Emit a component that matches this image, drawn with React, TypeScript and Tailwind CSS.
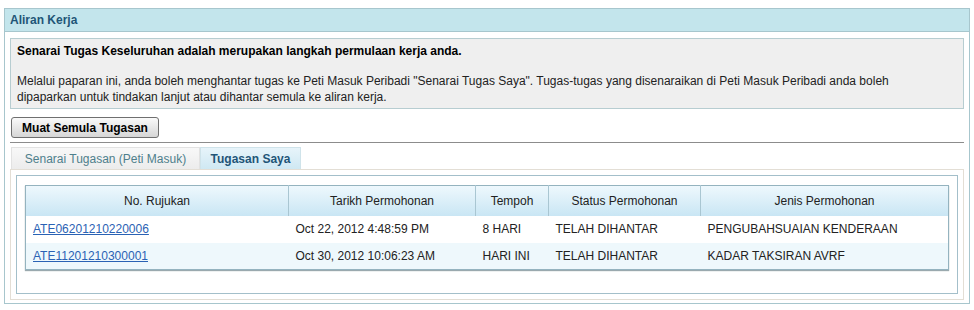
import React from 'react';

const rows = [
  { ref: 'ATE06201210220006', date: 'Oct 22, 2012 4:48:59 PM', tempoh: '8 HARI', status: 'TELAH DIHANTAR', jenis: 'PENGUBAHSUAIAN KENDERAAN' },
  { ref: 'ATE11201210300001', date: 'Oct 30, 2012 10:06:23 AM', tempoh: 'HARI INI', status: 'TELAH DIHANTAR', jenis: 'KADAR TAKSIRAN AVRF' },
];

export default function App() {
  return (
    <div className="w-[974px] h-[310px] bg-white pt-2 px-1 text-[12px] text-[#222]" style={{ fontFamily: '"Liberation Sans", Arial, sans-serif' }}>
      <div className="w-[966px] h-[296px] border border-[#a7c6cd] flex flex-col">
        <div className="h-[23px] bg-[#c3e5ec] border-b border-[#a7c6cd] px-[5px] flex items-center text-[#1f5577] font-semibold">
          Aliran Kerja
        </div>

        <div className="px-[5px] pt-[6px]">
          <div className="h-[71px] bg-[#efefef] border border-[#b7cdd1] px-[6px] pt-[4px] leading-[16px]">
            <div className="font-bold text-black">Senarai Tugas Keseluruhan adalah merupakan langkah permulaan kerja anda.</div>
            <div className="h-[14px]" />
            <div>
              Melalui paparan ini, anda boleh menghantar tugas ke Peti Masuk Peribadi "Senarai Tugas Saya". Tugas-tugas yang disenaraikan di Peti Masuk Peribadi anda boleh
              <br />
              dipaparkan untuk tindakan lanjut atau dihantar semula ke aliran kerja.
            </div>
          </div>

          <div className="mt-[8px] ml-[1px]">
            <button className="h-[21px] w-[148px] rounded-[3px] border border-[#6f6f6f] bg-gradient-to-b from-[#fafafa] to-[#d6d6d6] font-bold text-black text-[12px] leading-[18px]">
              Muat Semula Tugasan
            </button>
          </div>

          <div className="mt-[4px] border-t border-[#8c8c8c]" />

          <div className="mt-[4px] flex h-[22px]">
            <div className="ml-[1px] w-[189px] bg-gradient-to-b from-[#f8f8f8] to-[#ececec] border border-b-0 border-[#e2e2e2] text-[#4e7f8c] flex items-center justify-center">
              Senarai Tugasan (Peti Masuk)
            </div>
            <div className="w-[101px] bg-gradient-to-b from-[#e7f4fa] to-[#cfe8f3] border border-b-0 border-[#cfe3ea] text-[#1f5577] font-bold flex items-center justify-center">
              Tugasan Saya
            </div>
          </div>

          <div className="h-[131px] border border-[#e3ded5] p-[5px]">
            <div className="h-full border border-[#a3bfca] pt-[9px] px-[8px]">
              <table className="w-[924px] border-collapse border border-[#94b3bf] shadow-[0_1px_1px_#9aa9ae]">
                <thead>
                  <tr className="h-[30px] bg-gradient-to-b from-[#eef8fd] to-[#c9e6f4] text-[#222]">
                    <th className="w-[263px] font-normal border-r border-[#a9c6d2]">No. Rujukan</th>
                    <th className="w-[187px] font-normal border-r border-[#a9c6d2]">Tarikh Permohonan</th>
                    <th className="w-[73px] font-normal border-r border-[#a9c6d2]">Tempoh</th>
                    <th className="w-[152px] font-normal border-r border-[#a9c6d2]">Status Permohonan</th>
                    <th className="font-normal">Jenis Permohonan</th>
                  </tr>
                </thead>
                <tbody>
                  {rows.map((r, i) => (
                    <tr key={r.ref} className={i % 2 === 0 ? 'h-[27px] bg-white' : 'h-[27px] bg-[#eef8fc]'}>
                      <td className="pl-[7px]">
                        <a href="#" className="text-[#2a62b4] underline">{r.ref}</a>
                      </td>
                      <td className="pl-[7px]">{r.date}</td>
                      <td className="pl-[7px]">{r.tempoh}</td>
                      <td className="pl-[7px]">{r.status}</td>
                      <td className="pl-[7px]">{r.jenis}</td>
                    </tr>
                  ))}
                </tbody>
              </table>
            </div>
          </div>
        </div>
      </div>
    </div>
  );
}
